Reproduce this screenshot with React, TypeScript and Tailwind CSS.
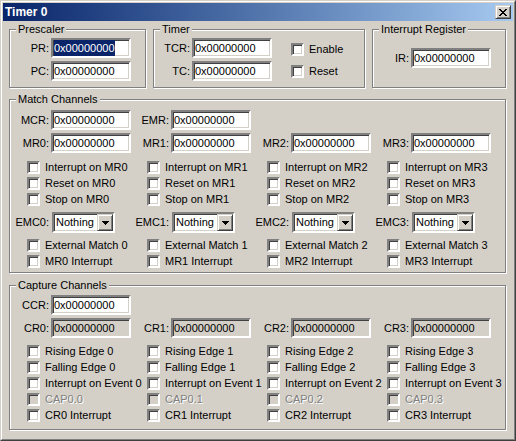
import type { ReactNode } from 'react';

// classic win2k bevels
const sunken =
  'border-2 border-t-[#808080] border-l-[#808080] border-r-white border-b-white shadow-[inset_1px_1px_0_#404040,inset_-1px_-1px_0_#d4d0c8]';
const raised =
  'border border-t-[#d4d0c8] border-l-[#d4d0c8] border-r-[#404040] border-b-[#404040] shadow-[inset_1px_1px_0_#fff,inset_-1px_-1px_0_#808080]';

function Group({ title, className, children }: { title: string; className: string; children?: ReactNode }) {
  return (
    <div className={`relative border border-[#808080] shadow-[inset_1px_1px_0_#fff,1px_1px_0_#fff] ${className}`}>
      <span className="absolute left-[6px] top-[-7px] px-[2px] bg-[#d4d0c8] leading-[13px] whitespace-nowrap">
        {title}
      </span>
      {children}
    </div>
  );
}

function Field({ readOnly, selected }: { readOnly?: boolean; selected?: boolean }) {
  return (
    <div className={`w-[80px] h-[20px] ${sunken} flex items-center pl-[1px] leading-[16px] ${readOnly ? 'bg-[#d4d0c8]' : 'bg-white'}`}>
      <span className={selected ? 'bg-[#0a246a] text-white' : ''}>0x00000000</span>
    </div>
  );
}

function LabeledField({ label, width, readOnly, selected }: { label: string; width: string; readOnly?: boolean; selected?: boolean }) {
  return (
    <div className="flex items-center">
      <span className={`${width} text-right pr-[2px] leading-[13px]`}>{label}</span>
      <Field readOnly={readOnly} selected={selected} />
    </div>
  );
}

function Check({ label, disabled }: { label: string; disabled?: boolean }) {
  return (
    <div className="flex items-start h-[16px]">
      <div className={`w-[13px] h-[13px] shrink-0 ${sunken} ${disabled ? 'bg-[#d4d0c8]' : 'bg-white'}`} />
      <span
        className={`ml-[5px] leading-[13px] whitespace-nowrap ${disabled ? 'text-[#808080] [text-shadow:1px_1px_0_#fff]' : ''}`}
      >
        {label}
      </span>
    </div>
  );
}

function Combo({ label }: { label: string }) {
  return (
    <div className="flex items-center">
      <span className="w-[41px] text-right pr-[3px] leading-[13px]">{label}</span>
      <div className={`w-[63px] h-[21px] ${sunken} bg-white flex items-center`}>
        <span className="flex-1 pl-[2px] leading-[17px]">Nothing</span>
        <div className={`w-[16px] h-[17px] ${raised} bg-[#d4d0c8] flex items-center justify-center`}>
          <svg width="7" height="4" viewBox="0 0 7 4" shapeRendering="crispEdges">
            <rect x="0" y="0" width="7" height="1" fill="#000" />
            <rect x="1" y="1" width="5" height="1" fill="#000" />
            <rect x="2" y="2" width="3" height="1" fill="#000" />
            <rect x="3" y="3" width="1" height="1" fill="#000" />
          </svg>
        </div>
      </div>
    </div>
  );
}

const channels = [0, 1, 2, 3];

export default function App() {
  return (
    <div className="w-[516px] h-[441px] bg-[#d4d0c8] border border-t-[#d4d0c8] border-l-[#d4d0c8] border-r-[#404040] border-b-[#404040] text-[11px] text-black font-['Liberation_Sans',Arial,sans-serif] select-none">
      <div className="h-full border border-t-white border-l-white border-r-[#808080] border-b-[#808080] p-[1px] flex flex-col">
        {/* title bar */}
        <div className="h-[18px] shrink-0 flex items-center bg-linear-to-r from-[#0a246a] to-[#a6caf0] pl-[2px] pr-[2px]">
          <span className="flex-1 text-white font-bold text-[12px] leading-[14px]">Timer 0</span>
          <div className={`w-[16px] h-[14px] ${raised} bg-[#d4d0c8] flex items-center justify-center`}>
            <svg width="8" height="7" viewBox="0 0 8 7" shapeRendering="crispEdges">
              <path
                d="M0 0h2v1h1v1h2V1h1V0h2v1H7v1H6v1H5v1h1v1h1v1h1v1H6V6H5V5H3v1H2v1H0V6h1V5h1V4h1V3H2V2H1V1H0z"
                fill="#000"
              />
            </svg>
          </div>
        </div>

        <div className="flex flex-col pl-[6px]">
          {/* top row */}
          <div className="flex items-start gap-[7px] mt-[8px]">
            <Group title="Prescaler" className="w-[137px] h-[59px]">
              <div className="flex flex-col gap-[3px] pt-[8px]">
                <LabeledField label="PR:" width="w-[41px]" selected />
                <LabeledField label="PC:" width="w-[41px]" />
              </div>
            </Group>
            <Group title="Timer" className="w-[212px] h-[59px]">
              <div className="flex">
                <div className="flex flex-col gap-[3px] pt-[8px]">
                  <LabeledField label="TCR:" width="w-[38px]" />
                  <LabeledField label="TC:" width="w-[38px]" />
                </div>
                <div className="flex flex-col gap-[6px] pt-[13px] ml-[19px]">
                  <Check label="Enable" />
                  <Check label="Reset" />
                </div>
              </div>
            </Group>
            <Group title="Interrupt Register" className="w-[134px] h-[59px]">
              <div className="pt-[18px]">
                <LabeledField label="IR:" width="w-[38px]" />
              </div>
            </Group>
          </div>

          {/* match channels */}
          <Group title="Match Channels" className="w-[497px] h-[174px] mt-[11px]">
            <div className="flex flex-col pt-[10px] pl-[1px]">
              <div className="flex">
                <div className="w-[120px]"><LabeledField label="MCR:" width="w-[40px]" /></div>
                <div className="w-[120px]"><LabeledField label="EMR:" width="w-[40px]" /></div>
              </div>
              <div className="flex mt-[3px]">
                {channels.map((i) => (
                  <div key={i} className="w-[120px]"><LabeledField label={`MR${i}:`} width="w-[40px]" /></div>
                ))}
              </div>
              <div className="flex mt-[8px]">
                {channels.map((i) => (
                  <div key={i} className="w-[120px] pl-[16px]">
                    <Check label={`Interrupt on MR${i}`} />
                    <Check label={`Reset on MR${i}`} />
                    <Check label={`Stop on MR${i}`} />
                  </div>
                ))}
              </div>
              <div className="flex mt-[3px]">
                {channels.map((i) => (
                  <div key={i} className="w-[120px]"><Combo label={`EMC${i}:`} /></div>
                ))}
              </div>
              <div className="flex mt-[6px]">
                {channels.map((i) => (
                  <div key={i} className="w-[120px] pl-[16px]">
                    <Check label={`External Match ${i}`} />
                    <Check label={`MR${i} Interrupt`} />
                  </div>
                ))}
              </div>
            </div>
          </Group>

          {/* capture channels */}
          <Group title="Capture Channels" className="w-[497px] h-[145px] mt-[12px]">
            <div className="flex flex-col pt-[9px] pl-[1px]">
              <div className="flex">
                <div className="w-[120px]"><LabeledField label="CCR:" width="w-[40px]" /></div>
              </div>
              <div className="flex mt-[3px]">
                {channels.map((i) => (
                  <div key={i} className="w-[120px]"><LabeledField label={`CR${i}:`} width="w-[40px]" readOnly /></div>
                ))}
              </div>
              <div className="flex mt-[7px]">
                {channels.map((i) => (
                  <div key={i} className="w-[120px] pl-[16px]">
                    <Check label={`Rising Edge ${i}`} />
                    <Check label={`Falling Edge ${i}`} />
                    <Check label={`Interrupt on Event ${i}`} />
                    <Check label={`CAP0.${i}`} disabled />
                    <Check label={`CR${i} Interrupt`} />
                  </div>
                ))}
              </div>
            </div>
          </Group>
        </div>
      </div>
    </div>
  );
}
